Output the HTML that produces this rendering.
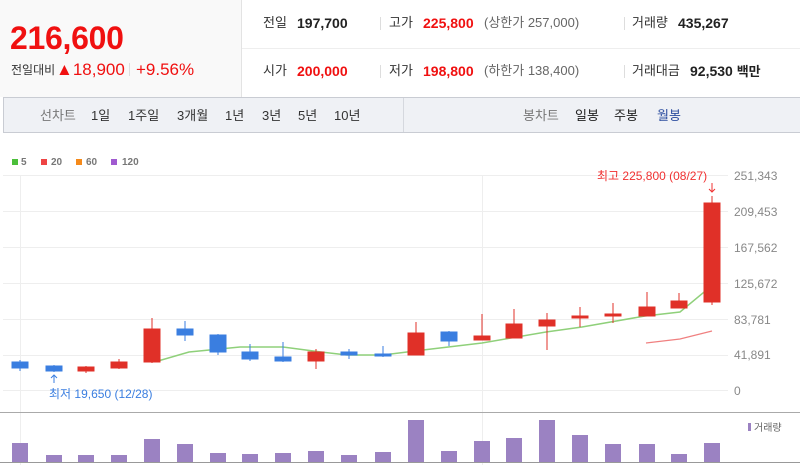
<!DOCTYPE html>
<html><head><meta charset="utf-8"><style>
body{margin:0;width:800px;height:465px;background:#fff;font-family:"Liberation Sans","Noto Sans CJK KR",sans-serif;position:relative;overflow:hidden}
.a{position:absolute;white-space:nowrap;line-height:16px}
.g{color:#333;font-size:13px}
.b{font-weight:bold;font-size:14px;color:#222}
.r{color:#f01010}
.s{color:#666;font-size:13px}
.sep{position:absolute;width:1px;height:13px;background:#ddd}
</style></head><body>
<div class="a" style="left:0;top:0;width:241px;height:97px;background:#f9f9f9;border-right:1px solid #e3e3e3"></div>
<div class="a r" style="left:10px;top:22px;font-size:32px;line-height:32px;font-weight:bold;letter-spacing:-0.3px">216,600</div>
<div class="a" style="left:11px;top:62px;font-size:12px;color:#333">전일대비</div>
<div class="a r" style="left:56px;top:60px;font-size:17px;line-height:20px">▲18,900</div>
<div class="sep" style="left:129px;top:63px"></div>
<div class="a r" style="left:136px;top:60px;font-size:17px;line-height:20px">+9.56%</div>
<div class="a" style="left:242px;top:48px;width:558px;height:1px;background:#eee"></div>
<div class="a g" style="left:263px;top:15px">전일</div><div class="a b" style="left:297px;top:15px">197,700</div>
<div class="sep" style="left:380px;top:17px"></div>
<div class="a g" style="left:389px;top:15px">고가</div><div class="a b r" style="left:423px;top:15px">225,800</div>
<div class="a s" style="left:484px;top:15px">(상한가 257,000)</div>
<div class="sep" style="left:624px;top:17px"></div>
<div class="a g" style="left:632px;top:15px">거래량</div><div class="a b" style="left:678px;top:15px">435,267</div>
<div class="a g" style="left:263px;top:63px">시가</div><div class="a b r" style="left:297px;top:63px">200,000</div>
<div class="sep" style="left:380px;top:65px"></div>
<div class="a g" style="left:389px;top:63px">저가</div><div class="a b r" style="left:423px;top:63px">198,800</div>
<div class="a s" style="left:484px;top:63px">(하한가 138,400)</div>
<div class="sep" style="left:624px;top:65px"></div>
<div class="a g" style="left:632px;top:63px">거래대금</div><div class="a b" style="left:690px;top:63px">92,530 <span style="font-size:13px">백만</span></div>
<div class="a" style="left:3px;top:97px;width:797px;height:34px;background:#eff1f5;border-top:1px solid #c9ccd3;border-bottom:1px solid #c9ccd3;border-left:1px solid #c9ccd3"></div>
<div class="a" style="left:403px;top:98px;width:1px;height:34px;background:#d5d8de"></div>
<div class="a" style="top:108px;left:40px;font-size:13px;color:#777">선차트</div>
<div class="a" style="top:108px;left:91px;font-size:13px;color:#333">1일</div>
<div class="a" style="top:108px;left:128px;font-size:13px;color:#333">1주일</div>
<div class="a" style="top:108px;left:177px;font-size:13px;color:#333">3개월</div>
<div class="a" style="top:108px;left:225px;font-size:13px;color:#333">1년</div>
<div class="a" style="top:108px;left:262px;font-size:13px;color:#333">3년</div>
<div class="a" style="top:108px;left:298px;font-size:13px;color:#333">5년</div>
<div class="a" style="top:108px;left:334px;font-size:13px;color:#333">10년</div>
<div class="a" style="top:108px;left:523px;font-size:13px;color:#777">봉차트</div>
<div class="a" style="top:108px;left:575px;font-size:13px;color:#222">일봉</div>
<div class="a" style="top:108px;left:614px;font-size:13px;color:#222">주봉</div>
<div class="a" style="top:108px;left:657px;font-size:13px;color:#2d4ea0">월봉</div>
<svg class="a" style="left:0;top:0" width="800" height="465" font-family="Liberation Sans, Noto Sans CJK KR, sans-serif">
<g font-size="10" fill="#777" font-weight="bold">
<rect x="12" y="159" width="6" height="6" fill="#4bbf3a"/><text x="21" y="165">5</text>
<rect x="41" y="159" width="6" height="6" fill="#ee4444"/><text x="51" y="165">20</text>
<rect x="76" y="159" width="6" height="6" fill="#f58a1a"/><text x="86" y="165">60</text>
<rect x="111" y="159" width="6" height="6" fill="#a05ad0"/><text x="122" y="165">120</text>
</g>
<g stroke="#eee" stroke-width="1">
<line x1="3" x2="728" y1="175.5" y2="175.5"/><line x1="3" x2="728" y1="211.5" y2="211.5"/>
<line x1="3" x2="728" y1="247.5" y2="247.5"/><line x1="3" x2="728" y1="283.5" y2="283.5"/>
<line x1="3" x2="728" y1="319.5" y2="319.5"/><line x1="3" x2="728" y1="355.5" y2="355.5"/>
<line x1="3" x2="728" y1="390.5" y2="390.5"/>
<line x1="20.5" x2="20.5" y1="175" y2="465"/><line x1="482.5" x2="482.5" y1="175" y2="465"/>
</g>
<line x1="0" x2="800" y1="412.5" y2="412.5" stroke="#aaa"/>
<line x1="0" x2="800" y1="462.5" y2="462.5" stroke="#999"/>
<g font-size="12" fill="#888">
<text x="734" y="180">251,343</text><text x="734" y="216">209,453</text><text x="734" y="252">167,562</text>
<text x="734" y="288">125,672</text><text x="734" y="324">83,781</text><text x="734" y="359">41,891</text>
<text x="734" y="395">0</text>
</g>
<polyline fill="none" stroke="#8fd07a" stroke-width="1.5" points="158,361 189,352 240,347 283,347 321,352 347,355 383,355 423,350 482,343 546,332 582,327 645,316 680,312 703,293 712,284"/>
<polyline fill="none" stroke="#f08080" stroke-width="1.2" points="646,343 680,339 712,331"/>
<g stroke-width="1">
<g fill="#3a7ee0" stroke="#3a7ee0">
<line x1="20" x2="20" y1="360" y2="371"/><rect x="12" y="362" width="16" height="6"/>
<line x1="54" x2="54" y1="365" y2="372"/><rect x="46" y="366" width="16" height="5"/>
<line x1="185" x2="185" y1="321" y2="341"/><rect x="177" y="329" width="16" height="6"/>
<line x1="218" x2="218" y1="334" y2="355"/><rect x="210" y="335" width="16" height="17"/>
<line x1="250" x2="250" y1="344" y2="361"/><rect x="242" y="352" width="16" height="7"/>
<line x1="283" x2="283" y1="342" y2="362"/><rect x="275" y="357" width="16" height="4"/>
<line x1="349" x2="349" y1="349" y2="359"/><rect x="341" y="352" width="16" height="3"/>
<line x1="383" x2="383" y1="346" y2="357"/><rect x="375" y="354" width="16" height="2"/>
<line x1="449" x2="449" y1="331" y2="346"/><rect x="441" y="332" width="16" height="9"/>
</g>
<g fill="#e03028" stroke="#e03028">
<line x1="86" x2="86" y1="366" y2="373"/><rect x="78" y="367" width="16" height="4"/>
<line x1="119" x2="119" y1="359" y2="369"/><rect x="111" y="362" width="16" height="6"/>
<line x1="152" x2="152" y1="318" y2="363"/><rect x="144" y="329" width="16" height="33"/>
<line x1="316" x2="316" y1="349" y2="369"/><rect x="308" y="352" width="16" height="9"/>
<line x1="416" x2="416" y1="322" y2="355"/><rect x="408" y="333" width="16" height="22"/>
<line x1="482" x2="482" y1="314" y2="340"/><rect x="474" y="336" width="16" height="4"/>
<line x1="514" x2="514" y1="309" y2="338"/><rect x="506" y="324" width="16" height="14"/>
<line x1="547" x2="547" y1="313" y2="350"/><rect x="539" y="320" width="16" height="6"/>
<line x1="580" x2="580" y1="307" y2="327"/><rect x="572" y="316" width="16" height="2"/>
<line x1="613" x2="613" y1="303" y2="323"/><rect x="605" y="314" width="16" height="2"/>
<line x1="647" x2="647" y1="292" y2="316"/><rect x="639" y="307" width="16" height="9"/>
<line x1="679" x2="679" y1="293" y2="308"/><rect x="671" y="301" width="16" height="7"/>
<line x1="712" x2="712" y1="196" y2="305"/><rect x="704" y="203" width="16" height="99"/>
</g>
</g>
<text x="597" y="180" font-size="12" fill="#f03030">최고 225,800 (08/27)</text>
<path d="M712 183v9M709 189l3 3 3-3" stroke="#f03030" fill="none"/>
<path d="M54 383v-8M51 378l3-3 3 3" stroke="#3a7ee0" fill="none"/>
<text x="49" y="398" font-size="12" fill="#3a7ee0">최저 19,650 (12/28)</text>
<g fill="#9b82c2">
<rect x="12" y="443" width="16" height="19"/><rect x="46" y="455" width="16" height="7"/>
<rect x="78" y="455" width="16" height="7"/><rect x="111" y="455" width="16" height="7"/>
<rect x="144" y="439" width="16" height="23"/><rect x="177" y="444" width="16" height="18"/>
<rect x="210" y="453" width="16" height="9"/><rect x="242" y="454" width="16" height="8"/>
<rect x="275" y="453" width="16" height="9"/><rect x="308" y="451" width="16" height="11"/>
<rect x="341" y="455" width="16" height="7"/><rect x="375" y="452" width="16" height="10"/>
<rect x="408" y="420" width="16" height="42"/><rect x="441" y="451" width="16" height="11"/>
<rect x="474" y="441" width="16" height="21"/><rect x="506" y="438" width="16" height="24"/>
<rect x="539" y="420" width="16" height="42"/><rect x="572" y="435" width="16" height="27"/>
<rect x="605" y="444" width="16" height="18"/><rect x="639" y="444" width="16" height="18"/>
<rect x="671" y="454" width="16" height="8"/><rect x="704" y="443" width="16" height="19"/>
<rect x="748" y="423" width="3" height="8"/>
</g>
<text x="754" y="431" font-size="10" fill="#666">거래량</text>
</svg>
</body></html>
